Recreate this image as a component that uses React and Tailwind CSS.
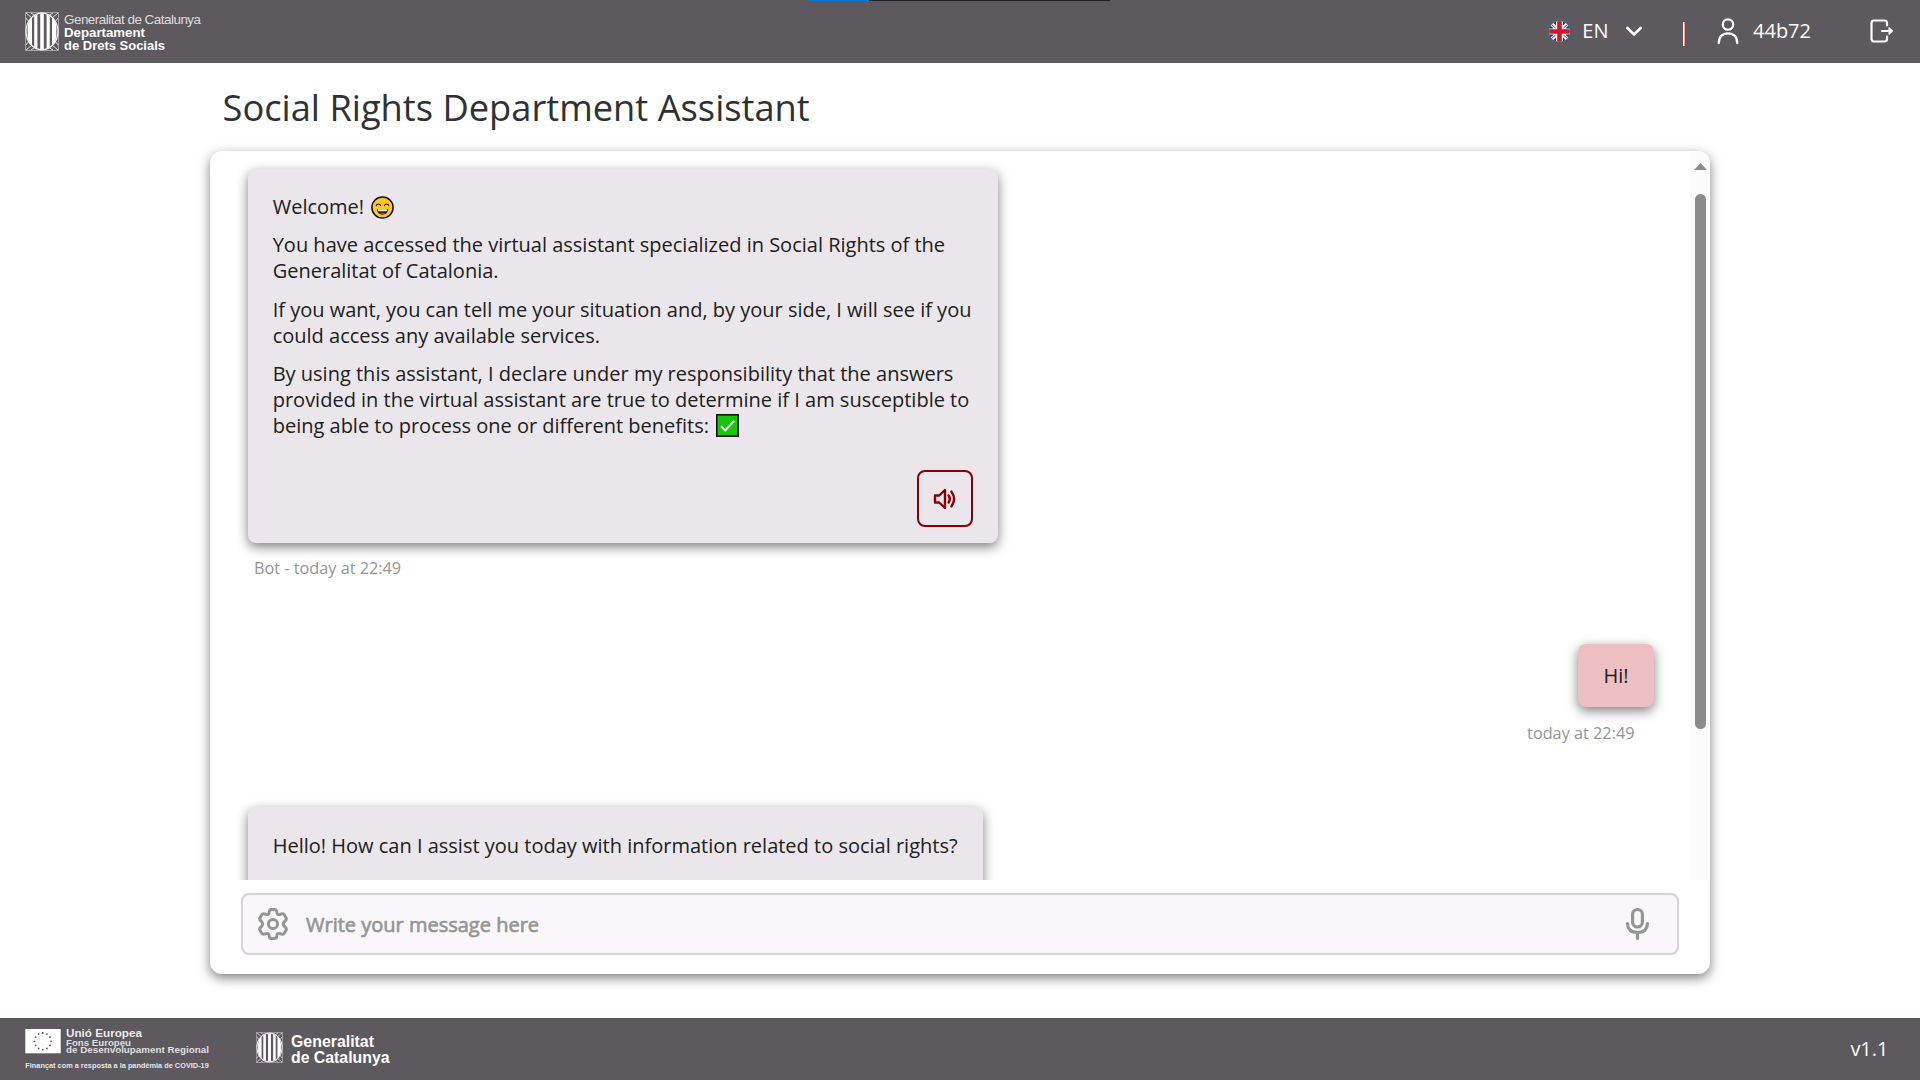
const SHADOW = "shadow-[0_4px_12px_rgba(0,0,0,0.5)]";

function Senyera({ className }) {
  return (
    <svg viewBox="0 0 34 39" preserveAspectRatio="none" className={className} fill="none" stroke="#fff">
      <rect x="0.6" y="0.6" width="32.8" height="37.8" strokeWidth="0.9" strokeOpacity="0.5" />
      <ellipse cx="17" cy="19.5" rx="16" ry="18.3" strokeWidth="1.2" />
      <g strokeWidth="1" strokeOpacity="0.8">
        <path d="M1 1l6 5M1 6l3 4M6 1l4 2.5M33 1l-6 5M33 6l-3 4M28 1l-4 2.5M1 38l6-5M1 33l3-4M6 38l4-2.5M33 38l-6-5M33 33l-3-4M28 38l-4-2.5" />
      </g>
      <path
        fill="#fff"
        stroke="none"
        d="M2.6 15Q3.4 8.6 7 5.6V33.4Q3.4 30.4 2.6 24ZM9.2 4.2Q10.6 3 12.4 2.4V36.6Q10.6 36 9.2 34.8ZM15.2 1.8H18.8V37.2H15.2ZM21.6 2.4Q23.4 3 24.8 4.2V34.8Q23.4 36 21.6 36.6ZM27 5.6Q30.6 8.6 31.4 15V24Q30.6 30.4 27 33.4Z"
      />
    </svg>
  );
}

function DepartmentLogo() {
  return (
    <div className="flex items-start gap-[5px]">
      <Senyera className="h-[39px] w-[34px]" />
      <svg width="140" height="40" className="overflow-visible font-['Liberation_Sans',Arial,sans-serif]" fill="#fff">
        <text x="0" y="12.3" fontSize="13.4" textLength="137" fillOpacity="0.8">Generalitat de Catalunya</text>
        <text x="0" y="25" fontSize="13" fontWeight="700" textLength="81" lengthAdjust="spacingAndGlyphs">Departament</text>
        <text x="0" y="38" fontSize="13" fontWeight="700" textLength="101" lengthAdjust="spacingAndGlyphs">de Drets Socials</text>
      </svg>
    </div>
  );
}

const STARS = Array.from({ length: 12 }, (_, i) => {
  const a = (i * Math.PI) / 6;
  return [17.8 + 8.3 * Math.sin(a), 16.3 - 8.3 * Math.cos(a)];
});

function EuLogo() {
  return (
    <svg width="186" height="50" className="overflow-visible font-['Liberation_Sans',Arial,sans-serif]" fill="#fff" fontWeight="700">
      <rect x="0.3" y="4" width="35.4" height="24.3" />
      {STARS.map(([x, y], i) => (
        <circle key={i} cx={x} cy={y} r="0.9" fill="#5e595f" />
      ))}
      <text x="41" y="12.4" fontSize="10.8" textLength="76" lengthAdjust="spacingAndGlyphs" fillOpacity="0.9">Unió Europea</text>
      <text x="41" y="20.7" fontSize="9" textLength="65" lengthAdjust="spacingAndGlyphs" fillOpacity="0.82">Fons Europeu</text>
      <text x="41" y="28.2" fontSize="9" textLength="143" lengthAdjust="spacingAndGlyphs" fillOpacity="0.82">de Desenvolupament Regional</text>
      <text x="0.3" y="42.8" fontSize="7.4" textLength="183.5" lengthAdjust="spacingAndGlyphs" fillOpacity="0.88">Finançat com a resposta a la pandèmia de COVID-19</text>
    </svg>
  );
}

function CatalunyaLogo() {
  return (
    <div className="flex items-start gap-2">
      <Senyera className="h-[31px] w-[27px]" />
      <svg width="102" height="36" className="overflow-visible font-['Liberation_Sans',Arial,sans-serif]" fill="#fff" fontWeight="700">
        <text x="0" y="14.5" fontSize="15.6" textLength="83" lengthAdjust="spacingAndGlyphs">Generalitat</text>
        <text x="0" y="30.5" fontSize="15.6" textLength="98.5" lengthAdjust="spacingAndGlyphs">de Catalunya</text>
      </svg>
    </div>
  );
}

function UkFlag() {
  return (
    <svg width="22" height="22" viewBox="0 0 22 22">
      <clipPath id="flag">
        <circle cx="11.5" cy="11.5" r="10.5" />
      </clipPath>
      <g clipPath="url(#flag)">
        <rect width="22" height="22" fill="#f3f3f3" />
        <path fill="#0f3480" d="M8 0v5.500L3.500 1zM1 4l4.500 4.500H0zM15 0v5.500L19.500 1zM22 4l-4.500 4.500h4.500zM8 22.500v-5L3.500 22zM1 19l4.500-4.500H0zM15 22.500v-5L19.500 22zM22 19l-4.500-4.500h4.500z" />
        <path stroke="#d2142c" strokeWidth="0.9" d="M3 4l4.500 4M20 4l-4.500 4M3 19l4.500-4M20 19l-4.500-4" />
        <path fill="#d2142c" d="M9.200 0h4.600v9.200h8.200v4.600h-8.200V22H9.200v-8.200H0V9.200h9.200z" />
      </g>
    </svg>
  );
}

function Smile() {
  return (
    <svg width="23" height="23" viewBox="0 0 23 23" className="ml-[7px] inline-block align-[-5px]">
      <circle cx="11.5" cy="11.5" r="10.6" fill="#ffc430" stroke="#111" strokeWidth="1.5" />
      <path d="M5 10q.8-2 2.4-2T9.800 10M13.200 10q.8-2 2.400-2T18 10" fill="none" stroke="#222" strokeWidth="1.1" />
      <path d="M5.800 13h11.400q-.4 5.700-5.700 5.700T5.800 13z" fill="#222" />
      <path d="M6.500 13.300h10l-.6 1.900H7.100z" fill="#fff" />
      <path d="M9 17.800q2.500-2 5 0-2.500 1.200-5 0z" fill="#e8341c" />
    </svg>
  );
}

function Check() {
  return (
    <svg width="23" height="23" viewBox="0 0 22 22" className="ml-[7.5px] inline-block align-[-4px]">
      <rect x="0.75" y="0.75" width="20.5" height="20.5" fill="#16c60c" stroke="#111" strokeWidth="1.5" />
      <path d="M4.800 11.800l4 3.900 8.600-9" fill="none" stroke="#fff" strokeWidth="1.9" />
    </svg>
  );
}

function BotBubble({ children, className = "" }) {
  return (
    <div className={`rounded-lg bg-[#ebe6eb] px-[24.7px] text-[20px] leading-[26px] text-[#202020] ${SHADOW} ${className}`}>
      {children}
    </div>
  );
}

export default function App() {
  return (
    <div className="flex h-screen flex-col overflow-hidden bg-white font-['Open_Sans','Noto_Sans',sans-serif]">
      <header className="relative flex h-[63px] shrink-0 items-start bg-[#5e595f] pl-[25px] text-white">
        <div className="absolute top-0 left-[809px] flex h-px w-[301px] bg-[#202020]">
          <div className="w-[60px] bg-[#0078d7]" />
        </div>
        <div className="pt-[11.5px]">
          <DepartmentLogo />
        </div>
        <div className="ml-auto flex h-[62px] items-center pr-[26px] text-[20px]">
          <UkFlag />
          <span className="ml-[12px]">EN</span>
          <svg width="18" height="11" viewBox="0 0 18 11" className="ml-[16.5px]" fill="none" stroke="#fff" strokeWidth="2.6" strokeLinecap="round" strokeLinejoin="round">
            <path d="M2.300 2l6.700 6.500 6.700-6.500" />
          </svg>
          <div className="mt-[5px] ml-[40px] flex h-[24px] w-[3px]">
            <div className="w-px bg-white" />
            <div className="w-px bg-[#f6a08f]" />
          </div>
          <svg width="22" height="28" viewBox="0 0 22 28" className="ml-[31px]" fill="none" stroke="#fff" strokeWidth="2.3" strokeLinecap="round">
            <circle cx="11" cy="7.5" r="5.2" />
            <path d="M1.800 26C1.800 20 5.500 16.300 11 16.300S20.200 20 20.200 26" />
          </svg>
          <span className="ml-[14px]">44b72</span>
          <svg width="24" height="24" viewBox="0 0 24 24" className="ml-[59px]" fill="none" stroke="#fff" strokeWidth="2.2" strokeLinecap="round" strokeLinejoin="round">
            <path d="M17 6.500V4Q17 1.500 14.500 1.500H4Q1.500 1.500 1.500 4V20Q1.500 22.500 4 22.500H14.500Q17 22.500 17 20V17.500" />
            <path d="M12 12H21" />
            <path d="M19.200 8.700L22.800 12L19.200 15.300Z" fill="#fff" strokeWidth="1" />
          </svg>
        </div>
      </header>

      <main className="mx-auto flex w-[1500px] grow flex-col">
        <h1 className="mt-[18.5px] pl-[12.5px] text-[36.25px] leading-[50px] text-[#2f3132]">Social Rights Department Assistant</h1>

        <section className={`mt-[19.5px] flex h-[823px] flex-col overflow-hidden rounded-xl bg-white ${SHADOW}`}>
          <div className="flex h-[729px] shrink-0 overflow-hidden">
            <div className="flex grow flex-col items-start overflow-hidden pt-[17.5px] pl-[38px]">
              <BotBubble className="h-[374px] w-[750px] shrink-0 pt-[25px]">
                <div className="flex flex-col gap-[12.6px] whitespace-nowrap">
                  <p className="h-[26px]">Welcome!<Smile /></p>
                  <p>You have accessed the virtual assistant specialized in Social Rights of the<br />Generalitat of Catalonia.</p>
                  <p>If you want, you can tell me your situation and, by your side, I will see if you<br />could access any available services.</p>
                  <p className="h-[78px]">By using this assistant, I declare under my responsibility that the answers<br />provided in the virtual assistant are true to determine if I am susceptible to<br />being able to process one or different benefits:<Check /></p>
                </div>
                <button className="mt-[31px] ml-auto flex h-[57px] w-[56px] items-center justify-center rounded-lg border-2 border-[#8b0000]">
                  <svg width="24" height="22" viewBox="0 0 24 22" fill="none" stroke="#8b0000" strokeWidth="2.4" strokeLinecap="round" strokeLinejoin="round">
                    <path d="M2 7.500H6.200L12 2V20L6.200 14.500H2Z" />
                    <path d="M15.600 7.500Q18 11 15.600 14.500M18.400 3.600Q23.800 11 18.400 18.400" />
                  </svg>
                </button>
              </BotBubble>
              <p className="mt-[13px] ml-[6px] text-[16.25px] leading-6 text-[#949694]">Bot - today at 22:49</p>

              <div className="mt-[64px] mr-[37px] flex flex-col items-end self-end">
                <div className={`flex h-[63px] w-[76px] items-center justify-center rounded-lg bg-[#eebfc0] pt-[2px] text-[20px] text-[#202020] ${SHADOW}`}>Hi!</div>
                <p className="mt-[14px] mr-[19.5px] text-[16.25px] leading-6 text-[#949694]">today at 22:49</p>
              </div>

              <BotBubble className="mt-[62.5px] h-[180px] w-[735px] shrink-0 pt-[25.5px] whitespace-nowrap">
                <p>Hello! How can I assist you today with information related to social rights?</p>
              </BotBubble>
            </div>
            <div className="flex w-[19px] shrink-0 flex-col items-center bg-[#fbfbfb] pt-[12px]">
              <svg width="13" height="7" viewBox="0 0 13 7">
                <path d="M6.500 0L13 7H0Z" fill="#8b8b8b" />
              </svg>
              <div className="mt-[24px] h-[535px] w-[11px] rounded-full bg-[#8b8b8b]" />
            </div>
          </div>

          <div className="mt-[13px] ml-[31px] flex h-[62px] w-[1438px] items-center rounded-lg border-2 border-[#d7d2d9] bg-[#f9f7fa] pr-[28px] pl-[14px] text-[#949694]">
            <svg width="32" height="34" viewBox="0 0 32 34" fill="none" stroke="currentColor" strokeWidth="3" strokeLinejoin="round">
              <circle cx="16" cy="17" r="4.6" />
              <path d="M12.100 5.600Q12.300 2.400 14.600 2.400H17.400Q19.700 2.400 19.900 5.600Q20.300 8.300 23 7.300Q26.200 5.900 27.300 7.700L29 10.700Q30.100 12.700 27.500 14.500Q25.200 17 27.500 19.500Q30.100 21.300 29 23.300L27.300 26.300Q26.200 28.100 23 26.700Q20.300 25.700 19.900 28.400Q19.700 31.600 17.400 31.600H14.600Q12.300 31.600 12.100 28.400Q11.700 25.700 9 26.700Q5.800 28.100 4.700 26.300L3 23.300Q1.900 21.300 4.500 19.500Q6.800 17 4.500 14.500Q1.900 12.700 3 10.700L4.700 7.700Q5.800 5.900 9 7.300Q11.700 8.300 12.100 5.600Z" />
            </svg>
            <span className="mt-[2px] ml-[17px] text-[20px] [-webkit-text-stroke:0.65px]">Write your message here</span>
            <svg width="24" height="34" viewBox="0 0 24 34" className="ml-auto" fill="none" stroke="currentColor" strokeWidth="3.2" strokeLinecap="round">
              <rect x="7.6" y="2.5" width="9.8" height="17.5" rx="4.900" />
              <path d="M2.500 16.500V17Q3 25.500 12.500 25.500T22.400 17V16.500M12.500 25.500V31.500" />
            </svg>
          </div>
        </section>
      </main>

      <footer className="flex h-[62px] shrink-0 items-start bg-[#5e595f] pr-[31.5px] pl-[25px] text-white">
        <div className="pt-[6.5px]">
          <EuLogo />
        </div>
        <div className="ml-[45px] pt-[14px]">
          <CatalunyaLogo />
        </div>
        <span className="ml-auto self-center text-[20px]">v1.1</span>
      </footer>
    </div>
  );
}
